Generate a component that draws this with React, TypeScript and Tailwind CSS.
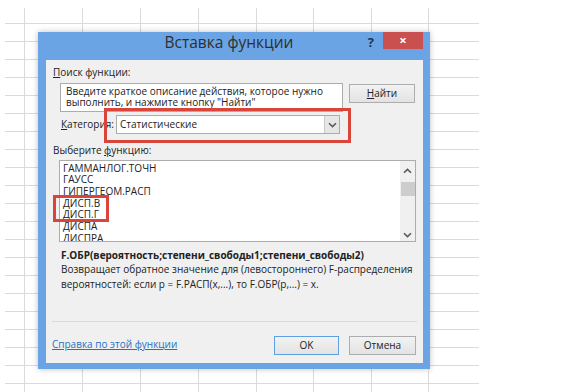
import clsx from 'clsx'

const FUNCS = ['ГАММАНЛОГ.ТОЧН', 'ГАУСС', 'ГИПЕРГЕОМ.РАСП', 'ДИСП.В', 'ДИСП.Г', 'ДИСПА', 'ДИСПРА']

const COLS = 9
const ROWS = 22

function Chevron({ up = false }: { up?: boolean }) {
  return (
    <svg width="9" height="6" viewBox="0 0 9 6" className={clsx(up && 'rotate-180')}>
      <path d="M1 1.2 L4.5 4.6 L8 1.2" fill="none" stroke="#5a5a5a" strokeWidth="1.6" />
    </svg>
  )
}

function Sheet() {
  return (
    <div className="grid grid-cols-[20px_58px_58px_58px_58px_57px_58px_57px_50px] grid-rows-[16px_repeat(21,18px)] pl-[5px] pt-[8px]">
      {Array.from({ length: COLS * ROWS }).map((_, i) => (
        <div key={i} className={clsx('border-b border-[#dadada]', i % COLS < COLS - 1 && 'border-r')} />
      ))}
    </div>
  )
}

function Button({ children, primary = false, className }: { children: React.ReactNode; primary?: boolean; className?: string }) {
  return (
    <div
      className={clsx(
        'h-[19px] flex items-center justify-center bg-gradient-to-b from-[#f2f2f2] to-[#e3e3e3] border',
        primary ? 'border-[#5fa0e3]' : 'border-[#adadad]',
        className,
      )}
    >
      {children}
    </div>
  )
}

export default function App() {
  return (
    <div className="relative w-[572px] h-[392px] overflow-hidden bg-white font-['Open_Sans',sans-serif] text-[10px] text-[#222]">
      <Sheet />

      {/* dialog */}
      <div className="absolute left-[38px] top-[32px] w-[392px] h-[337px] flex flex-col bg-[#6aa4e4] shadow-[0_0_6px_rgba(0,0,0,0.25)]">
        <div className="h-[28px] grid grid-cols-[1fr_auto_1fr]">
          <div />
          <div className="mt-[1px] mr-[10px] leading-[18px] text-[15.5px] text-[#2f2f2f]">Вставка функции</div>
          <div className="flex justify-end items-start">
            <span className="mt-[1px] mr-[9px] leading-[18px] text-[13px] font-bold text-[#26344a]">?</span>
            <div className="w-[40px] h-[17px] mr-[7px] bg-[#c9504f] flex items-center justify-center text-white text-[13px] font-bold leading-none">
              ×
            </div>
          </div>
        </div>

        <div className="relative flex-1 ml-[8px] mr-[7px] mb-[6px] bg-[#f0f0f0] flex flex-col">
          <div className="mt-[5px] ml-[7px] leading-[14px]">
            <span className="underline">П</span>оиск функции:
          </div>

          <div className="mt-[4px] flex items-start">
            <div className="ml-[14px] w-[283px] h-[29px] bg-white border border-[#acacac] px-[5px] pt-[1.5px] leading-[11.5px] overflow-hidden">
              Введите краткое описание действия, которое нужно
              <br />
              выполнить, и нажмите кнопку "Найти"
            </div>
            <Button className="ml-[6px] mt-[1px] w-[66px]">
              <span className="underline">Н</span>айти
            </Button>
          </div>

          <div className="mt-[3px] flex items-center h-[19px]">
            <div className="ml-[15px] w-[55px]">
              <span className="underline">К</span>атегория:
            </div>
            <div className="w-[224px] h-[19px] bg-white border border-[#acacac] flex items-center">
              <span className="flex-1 pl-[3px]">Статистические</span>
              <div className="w-[15px] h-[17px] bg-[#e6e6e6] border-l border-[#c8c8c8] flex items-center justify-center">
                <Chevron />
              </div>
            </div>
          </div>

          <div className="mt-[9px] ml-[7px] leading-[14px]">
            Выберите <span className="underline">ф</span>ункцию:
          </div>

          <div className="mt-[3px] ml-[13px] w-[357px] h-[82px] bg-white border border-[#acacac] flex">
            <div className="flex-1 pl-[3px] pt-[1.5px] leading-[11.67px] overflow-hidden">
              {FUNCS.map((f) => (
                <div key={f}>{f}</div>
              ))}
            </div>
            <div className="w-[15px] bg-[#f0f0f0] flex flex-col items-center">
              <div className="mt-[7px]">
                <Chevron up />
              </div>
              <div className="mt-[8px] w-[14px] h-[14px] bg-[#cdcdcd]" />
              <div className="mt-auto mb-[3px]">
                <Chevron />
              </div>
            </div>
          </div>

          <div className="mt-[6px] ml-[15px] leading-[14px] font-bold whitespace-nowrap">
            F.ОБР(вероятность;степени_свободы1;степени_свободы2)
          </div>
          <div className="ml-[15px] leading-[15px] whitespace-nowrap">
            Возвращает обратное значение для (левостороннего) F-распределения
            <br />
            вероятностей: если p = F.РАСП(x,...), то F.ОБР(p,...) = x.
          </div>

          <div className="mt-auto ml-[6px] w-[365px] h-px bg-[#dadada]" />

          <div className="mt-[14px] mb-[8px] flex items-start">
            <a className="ml-[6px] mt-[1px] leading-[14px] text-[#2a70c2] underline">Справка по этой функции</a>
            <Button primary className="ml-auto w-[65px]">
              OK
            </Button>
            <Button className="ml-[10px] mr-[7px] w-[67px]">Отмена</Button>
          </div>

          {/* highlight frames */}
          <div className="absolute left-[58px] top-[48px] w-[247px] h-[35px] border-[3px] border-[#d9443b]" />
          <div className="absolute left-[7px] top-[135px] w-[56px] h-[27px] border-[3px] border-[#d9443b]" />
        </div>
      </div>
    </div>
  )
}
